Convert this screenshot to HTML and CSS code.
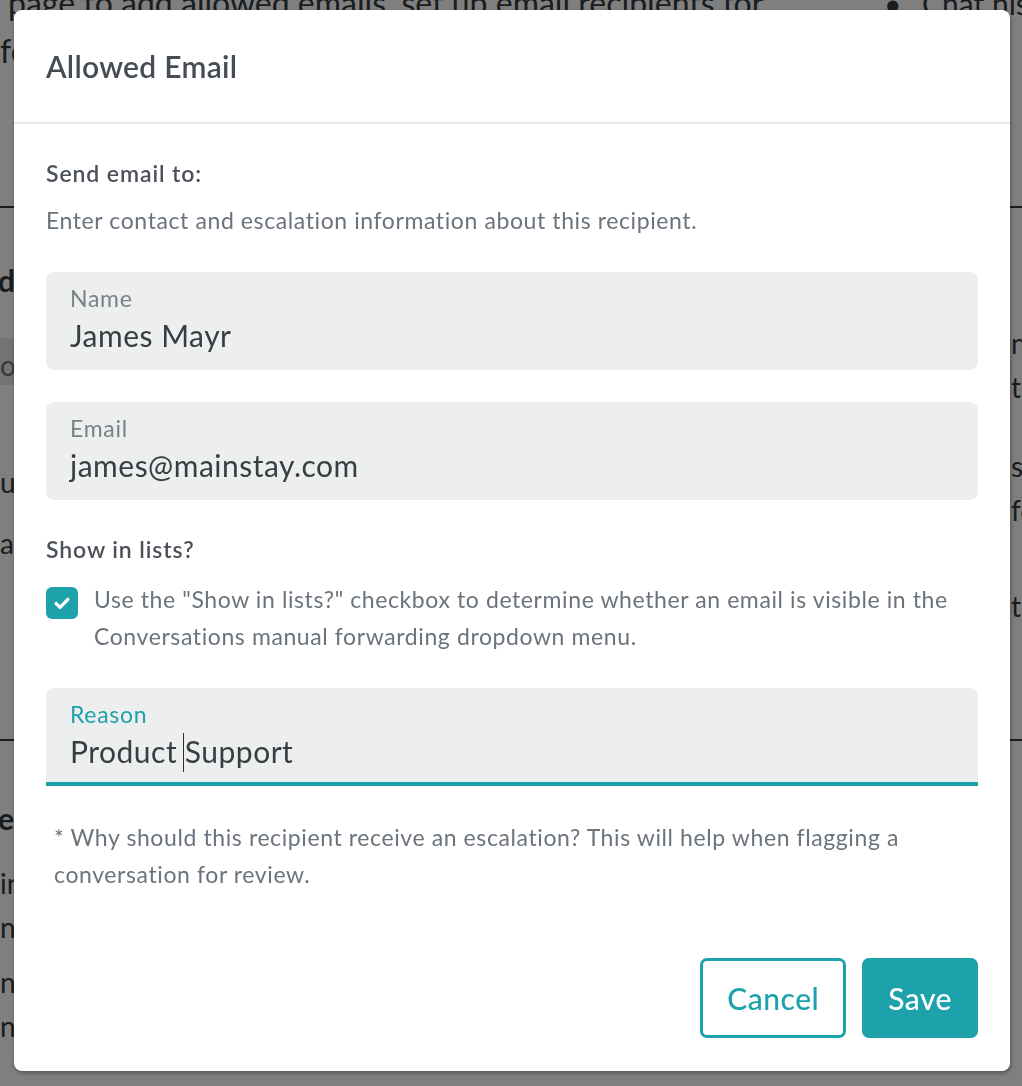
FILE: index.html
```html
<!DOCTYPE html>
<html lang="en">
<head>
<meta charset="utf-8">
<title>Allowed Email</title>
<link rel="stylesheet" href="styles.css">
</head>
<body>
<div class="page">
  <div class="intro">
    <div class="intro-main">
      <div class="tline">page to add allowed emails, set up email recipients for</div>
      <div class="tline flush">forwarding, and manage who can see each email address in lists.</div>
    </div>
    <ul class="intro-side"><li><span class="dot">•</span>Chat history</li></ul>
  </div>
  <hr class="rule rule-a">
  <div class="cols">
    <div class="col-left">
      <div class="line head g50">domains and addresses</div>
      <div class="band">order by recipient name</div>
      <div class="line g75">ubiquitous routing for all student messages</div>
      <div class="line g17">ays to forward conversations to staff</div>
    </div>
    <div class="col-right">
      <div class="line g113">notifications</div>
      <div class="line">to staff</div>
      <div class="line g35">settings</div>
      <div class="line">for lists</div>
      <div class="line g52">teams</div>
    </div>
  </div>
  <hr class="rule rule-b">
  <div class="col-bottom">
    <div class="line head g55">escalation recipients</div>
    <div class="line g21">in this section you can review</div>
    <div class="line">nthe list of all contacts</div>
    <div class="line g11">none of these are shown</div>
    <div class="line">new recipients appear here</div>
  </div>
</div>

<div class="overlay"></div>

<div class="modal" role="dialog" aria-labelledby="modal-title">
  <div class="modal-header">
    <h2 class="modal-title" id="modal-title">Allowed Email</h2>
  </div>
  <div class="modal-body">
    <div class="section-title">Send email to:</div>
    <p class="muted m10">Enter contact and escalation information about this recipient.</p>

    <div class="field m33">
      <div class="field-label">Name</div>
      <div class="field-value">James Mayr</div>
    </div>

    <div class="field m32">
      <div class="field-label">Email</div>
      <div class="field-value">james@mainstay.com</div>
    </div>

    <div class="section-title m31">Show in lists?</div>
    <div class="check-row m13">
      <span class="checkbox">
        <svg width="32" height="32" viewBox="0 0 32 32" aria-hidden="true">
          <path d="M10.2 16.6 L14.1 20.4 L21.9 12.4" fill="none" stroke="#fff" stroke-width="3.4" stroke-linecap="round" stroke-linejoin="round"/>
        </svg>
      </span>
      <p class="muted">Use the "Show in lists?" checkbox to determine whether an email is visible in the Conversations manual forwarding dropdown menu.</p>
    </div>

    <div class="field field-active m33">
      <div class="field-label">Reason</div>
      <div class="field-value">Product <span class="caret"></span>Support</div>
    </div>

    <p class="muted helper m33">* Why should this recipient receive an escalation? This will help when flagging a conversation for review.</p>

    <div class="actions">
      <button class="btn btn-outline" type="button">Cancel</button>
      <button class="btn btn-primary" type="button">Save</button>
    </div>
  </div>
</div>
</body>
</html>
```

FILE: styles.css
```css
html, body {
  margin: 0;
  padding: 0;
}

body {
  width: 1022px;
  height: 1086px;
  overflow: hidden;
  background: #ffffff;
  font-family: Lato, "Open Sans", sans-serif;
}

/* ---------- background page ---------- */
.page {
  width: 1022px;
  overflow: hidden;
  color: #343a40;
  font-size: 28px;
  white-space: nowrap;
}

.intro {
  display: flex;
  margin-top: -21px;
  font-size: 30px;
}

.intro-main {
  flex: none;
  width: 866px;
  overflow: hidden;
  padding-left: 8px;
  font-size: 32px;
}

.tline {
  height: 48px;
  line-height: 48px;
}

.tline.flush {
  margin-left: -8px;
}

.intro-side {
  flex: 1;
  min-width: 0;
  overflow: hidden;
  list-style: none;
  margin: 0;
  padding: 0 0 0 10px;
  line-height: 48px;
}

.dot {
  display: inline-block;
  width: 38px;
}

.rule {
  border: 0;
  margin: 0;
  height: 2px;
  background: #343a40;
}

.rule-a {
  margin-top: 131px;
}

.rule-b {
  margin-top: 110px;
}

.cols {
  display: grid;
  grid-template-columns: 1011px minmax(0, 1fr);
  height: 421px;
}

.col-left,
.col-right {
  overflow: hidden;
}

.line {
  height: 44px;
  line-height: 44px;
}

.head {
  font-weight: 700;
  font-size: 30px;
  margin-left: -2px;
}

.band {
  margin-top: 36px;
  height: 39px;
  padding-top: 8px;
  line-height: 39px;
  background: #e6e6e6;
  color: #6c757d;
}

.g11 { margin-top: 11px; }
.g17 { margin-top: 17px; }
.g21 { margin-top: 21px; }
.g35 { margin-top: 35px; }
.g50 { margin-top: 50px; }
.g52 { margin-top: 52px; }
.g55 { margin-top: 55px; }
.g75 { margin-top: 75px; }
.g113 { margin-top: 113px; }

.col-bottom {
  overflow: hidden;
}

.overlay {
  position: fixed;
  inset: 0;
  background: rgba(0, 0, 0, 0.5);
}

/* ---------- modal ---------- */
.modal {
  position: fixed;
  top: 10px;
  left: 14px;
  width: 996px;
  height: 1061px;
  background: #ffffff;
  border-radius: 8px;
  box-shadow: 1px 2px 4px rgba(0, 0, 0, 0.35);
  display: flex;
  flex-direction: column;
  box-sizing: border-box;
}

.modal-header {
  height: 112px;
  flex: none;
  display: flex;
  align-items: center;
  padding: 0 32px;
  border-bottom: 2px solid #e7e9ec;
}

.modal-title {
  margin: 0;
  font-size: 30px;
  font-weight: 600;
  color: #454c54;
  letter-spacing: 0.3px;
}

.modal-body {
  padding: 31px 32px 33px;
  display: flex;
  flex-direction: column;
}

.section-title {
  font-size: 23px;
  line-height: 37px;
  font-weight: 600;
  letter-spacing: 0.9px;
  color: #4b5158;
}

.muted {
  margin: 0;
  font-size: 23px;
  line-height: 37px;
  letter-spacing: 0.6px;
  color: #6b737c;
}

.m10 { margin-top: 10px; }
.m13 { margin-top: 13px; }
.m31 { margin-top: 31px; }
.m32 { margin-top: 32px; }
.m33 { margin-top: 33px; }

.field {
  height: 98px;
  box-sizing: border-box;
  background: #edefef;
  border-radius: 8px;
  padding: 12px 24px 0;
}

.field-label {
  font-size: 23px;
  line-height: 28px;
  letter-spacing: 0.7px;
  color: #7a8087;
}

.field-value {
  margin-top: 4px;
  font-size: 30px;
  line-height: 38px;
  letter-spacing: 0.5px;
  color: #383d43;
}

.field-active {
  border-radius: 8px 8px 0 0;
  border-bottom: 4px solid #1da2ac;
}

.field-active .field-label {
  color: #1da2ac;
}

.caret {
  display: inline-block;
  width: 0;
  height: 39px;
  border-left: 1.5px solid #2b2f33;
  margin-left: -2px;
  margin-right: 0.5px;
  vertical-align: -9px;
}

.check-row {
  display: flex;
  align-items: flex-start;
  gap: 16px;
}

.checkbox {
  flex: none;
  width: 32px;
  height: 32px;
  margin-top: 6px;
  border-radius: 6px;
  background: #1da2ac;
  display: flex;
}

.helper {
  padding-left: 8px;
}

.actions {
  margin-top: 65px;
  display: flex;
  justify-content: flex-end;
  gap: 16px;
}

.btn {
  height: 80px;
  box-sizing: border-box;
  border: 3px solid #1da2ac;
  border-radius: 7px;
  font-family: Lato, "Open Sans", sans-serif;
  font-size: 30px;
  font-weight: 500;
  letter-spacing: 0.5px;
  cursor: pointer;
}

.btn-outline {
  padding: 0 24px;
  background: #ffffff;
  color: #1da2ac;
}

.btn-primary {
  padding: 0 23px;
  background: #1da2ac;
  color: #ffffff;
}
```
